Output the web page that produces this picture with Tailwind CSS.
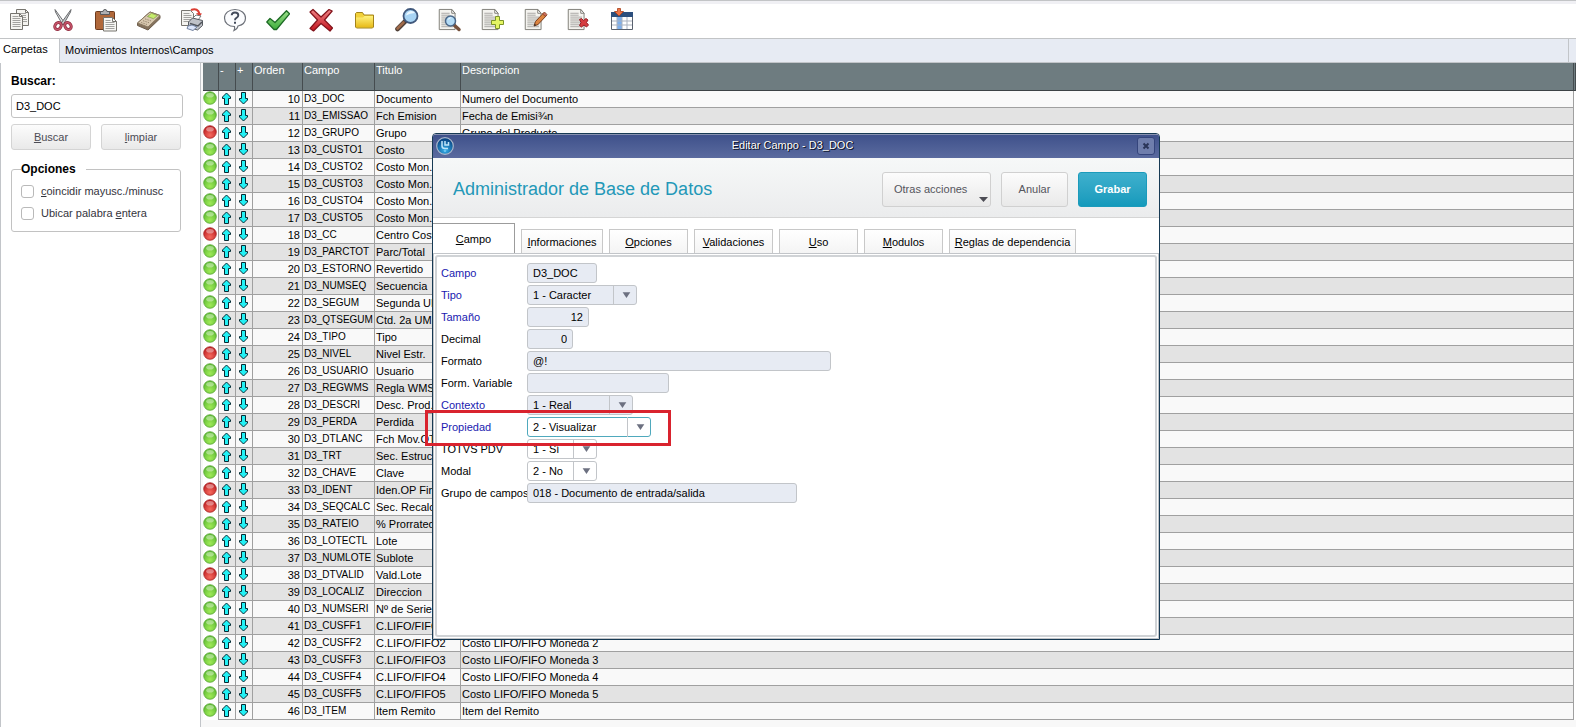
<!DOCTYPE html>
<html lang="es">
  <head>
    <meta charset="UTF-8" />
    <meta name="viewport" content="width=device-width, initial-scale=1.0" />
    <title>Editar Campo - D3_DOC</title>
    <script src="https://cdn.jsdelivr.net/npm/@tailwindcss/browser@4"></script>
  </head>
  <body class="relative h-screen overflow-hidden flex flex-col bg-white font-['Liberation_Sans',Arial,sans-serif] text-[11px] leading-4 text-black">
    <!-- Shared shapes -->
    <svg class="absolute size-0" aria-hidden="true">
      <defs>
        <radialGradient id="gGreen" cx="50%" cy="75%" r="70%">
          <stop offset="0" stop-color="#a0ea58" />
          <stop offset="1" stop-color="#5cba32" />
        </radialGradient>
        <radialGradient id="gRed" cx="50%" cy="75%" r="70%">
          <stop offset="0" stop-color="#f56a5e" />
          <stop offset="1" stop-color="#bd1c20" />
        </radialGradient>
        <radialGradient id="gBlue" cx="50%" cy="75%" r="70%">
          <stop offset="0" stop-color="#35b0ea" />
          <stop offset="1" stop-color="#06407f" />
        </radialGradient>
        <linearGradient id="gCheck" x1="0" y1="0" x2="0" y2="1">
          <stop offset="0" stop-color="#9be08a" />
          <stop offset="1" stop-color="#3fae3c" />
        </linearGradient>
        <linearGradient id="gFolder" x1="0" y1="0" x2="0" y2="1">
          <stop offset="0" stop-color="#fff27c" />
          <stop offset="1" stop-color="#e8bc1c" />
        </linearGradient>
        <linearGradient id="gCross" x1="0" y1="0" x2="0" y2="1">
          <stop offset="0" stop-color="#f08486" />
          <stop offset="1" stop-color="#c3121c" />
        </linearGradient>
        <symbol id="page" viewBox="0 0 24 24" preserveAspectRatio="none">
          <path d="M1.500 1.500h15l4 4v17h-19z" fill="#f4f3ef" stroke="#77756f" />
          <path d="M16.500 1.500v4h4z" fill="#fff" stroke="#77756f" />
          <path d="M4 5.500h10M4 7.500h10M4 9.500h14M4 11.500h14M4 13.500h14M4 15.500h14M4 17.500h14M4 19.500h14" stroke="#a3a29f" />
        </symbol>
        <symbol id="green" viewBox="0 0 14 14">
          <circle cx="7" cy="7" r="6.300" fill="url(#gGreen)" stroke="#5aa636" stroke-width=".8" />
          <ellipse cx="7" cy="4.200" rx="3.800" ry="2.300" fill="#fff" opacity=".4" />
        </symbol>
        <symbol id="red" viewBox="0 0 14 14">
          <circle cx="7" cy="7" r="6.300" fill="url(#gRed)" stroke="#a92a2a" stroke-width=".8" />
          <ellipse cx="7" cy="4.200" rx="3.800" ry="2.300" fill="#fff" opacity=".4" />
        </symbol>
        <symbol id="up" viewBox="0 0 11 13">
          <path d="M5.500 1 9.500 5v1.500h-2v6h-4v-6h-2V5z" fill="#22f0f4" stroke="#062a33" />
        </symbol>
        <symbol id="down" viewBox="0 0 11 13">
          <path d="M5.500 12 9.500 8V6.500h-2v-6h-4v6h-2V8z" fill="#22f0f4" stroke="#062a33" />
        </symbol>
      </defs>
    </svg>

    <!-- Toolbar -->
    <header class="h-[39px] shrink-0 border-t border-b border-[#c2c4c6] bg-white">
      <div class="h-full border-t-3 border-[#f0f0f4] flex items-center gap-[19px] pl-2 pb-0.5">
        <button type="button" aria-label="Copiar" class="size-6">
          <svg viewBox="0 0 24 24" fill="none">
            <path d="M8.500 1.500h9l3 3v13h-12z" fill="#f5f4f0" stroke="#77756f" />
            <path d="M17.500 1.500v3h3" stroke="#77756f" />
            <path d="M11 5.500h7M11 7.500h7M11 9.500h7M14 11.500h5M14 13.500h5" stroke="#a3a29f" />
            <path d="M2.500 5.500h9l3 3v13h-12z" fill="#f5f4f0" stroke="#77756f" />
            <path d="M11.500 5.500v3h3" stroke="#77756f" />
            <path d="M4.500 8.500h6M4.500 10.500h8M4.500 12.500h8M4.500 14.500h8M4.500 16.500h8M4.500 18.500h8" stroke="#a3a29f" />
          </svg>
        </button>
        <button type="button" aria-label="Cortar" class="size-6">
          <svg viewBox="0 0 24 24" fill="none">
            <path d="M4 1.500 14.500 16l-3 .5L4.500 4z" fill="#e4e5e6" stroke="#6b6d70" />
            <path d="M20 1.500 9.500 16l3 .5L19.500 4z" fill="#c6c8ca" stroke="#6b6d70" />
            <ellipse cx="7" cy="18" rx="3" ry="3.700" transform="rotate(35 7 18)" stroke="#8e2b3e" stroke-width="3" />
            <ellipse cx="17" cy="18" rx="3" ry="3.700" transform="rotate(-35 17 18)" stroke="#8e2b3e" stroke-width="3" />
            <ellipse cx="7" cy="18" rx="3" ry="3.700" transform="rotate(35 7 18)" stroke="#c8566c" stroke-width="1.500" />
            <ellipse cx="17" cy="18" rx="3" ry="3.700" transform="rotate(-35 17 18)" stroke="#c8566c" stroke-width="1.500" />
          </svg>
        </button>
        <button type="button" aria-label="Pegar" class="size-6">
          <svg viewBox="0 0 24 24" fill="none">
            <rect x="1.500" y="3.500" width="19" height="18" rx="1" fill="#b0683a" stroke="#6c3a1e" />
            <path d="M6.500 6.500V3.500H9q0-2 2-2t2 2h2.500v3z" fill="#aeb0b3" stroke="#595b5f" />
            <path d="M9.500 9.500h9l4 4v9.500h-13z" fill="#f7f7f4" stroke="#77756f" />
            <path d="M18.500 9.500v4h4" stroke="#77756f" />
            <path d="M11.500 12.500h5M11.500 14.500h9M11.500 16.500h9M11.500 18.500h9M11.500 20.500h9" stroke="#a3a29f" />
          </svg>
        </button>
        <button type="button" aria-label="Calculadora" class="size-6">
          <svg viewBox="0 0 24 24" fill="none">
            <path d="M.500 15 13 4l10 3.500v3L11 22 .500 17.500z" fill="#85725c" stroke="#6c5d4b" />
            <path d="M.500 15 13 4l10 3.500L11 19z" fill="#d8c8af" stroke="#8a7962" />
            <path d="m10.500 8.500 4-3.200 6 2.200-4 3.200z" fill="#c6ec6c" stroke="#7f9a45" stroke-width=".7" />
            <path d="m4 14.500 6 2M6 12.700l6 2M8 10.900l6 2" stroke="#9b8a72" stroke-dasharray="1.500 1" />
          </svg>
        </button>
        <button type="button" aria-label="Imprimir" class="size-6">
          <svg viewBox="0 0 24 24" fill="none">
            <path d="M1.500 2.500h9l3 3v12h-12z" fill="#f5f4f0" stroke="#77756f" />
            <path d="M3.500 5.500h6M3.500 7.500h8M3.500 9.500h8M3.500 11.500h8M3.500 13.500h6" stroke="#a3a29f" />
            <path d="M11 2q7-2.500 8.500 4" stroke="#db3d33" stroke-width="2" />
            <path d="m16 5 6 .5-2.500 3.500z" fill="#db3d33" />
            <path d="m12 11 4-4 5 1-3 4z" fill="#fff" stroke="#77797c" />
            <path d="m8.500 14 4-4 10 2.500v5l-5 4.500-9-3z" fill="#bfc2c8" stroke="#565a60" />
            <path d="m10 15.500 8 2.500 4-4" stroke="#50545b" stroke-width="1.500" />
            <path d="m8 18 4-1 5 2-4 3.500-6-2z" fill="#dce6fb" stroke="#72829f" />
          </svg>
        </button>
        <button type="button" aria-label="Ayuda" class="size-6">
          <svg viewBox="0 0 24 24" fill="none">
            <path d="M12 1.500c6 0 10.500 3.700 10.500 8.500 0 4-3 7-7.500 8q-.5 3-4 4.500 1-2 .5-4C5.500 18.500 1.500 15 1.500 10S6 1.500 12 1.500z" fill="#fbfcfe" stroke="#6c7078" stroke-width="1.200" />
            <path d="M8.700 7.300Q8.700 4.500 12 4.500t3.300 2.800Q15.300 9 13.500 9.800 12 10.500 12 12.200" stroke="#434b5b" stroke-width="1.900" />
            <path d="M11 13.700h2v2.100h-2z" fill="#434b5b" />
          </svg>
        </button>
        <button type="button" aria-label="Confirmar" class="size-6">
          <svg viewBox="0 0 24 24"><path d="M.800 14 4 10.500 9 14.500 20.500 2.800 23.500 5.800 10.500 21.500 8 21.500z" fill="url(#gCheck)" stroke="#1c6a24" stroke-width="1.300" stroke-linejoin="round" /></svg>
        </button>
        <button type="button" aria-label="Cancelar" class="size-6">
          <svg viewBox="0 0 24 24"><path d="M4 1.500 12 9 20 1.500l3.200 1.500-7.700 9L23.500 20 21 23l-9-7.500L4.500 23 1 20.500 8.500 12 1 4z" fill="url(#gCross)" stroke="#82131b" stroke-width="1.200" stroke-linejoin="round" /></svg>
        </button>
        <button type="button" aria-label="Carpeta" class="size-6">
          <svg viewBox="0 0 24 24"><path d="M3.500 19V5.500l1-1h6l1.500 2.500h9.500V19l-1 1h-16z" fill="#f2d13a" stroke="#a3831b" /><path d="M4 9.500h7l1.500-1.500H21V19H4z" fill="url(#gFolder)" /></svg>
        </button>
        <button type="button" aria-label="Buscar registro" class="size-6">
          <svg viewBox="0 0 24 24" fill="none">
            <path d="m2.500 21 8-8" stroke="#4f4038" stroke-width="4.600" stroke-linecap="round" />
            <path d="m2.500 20.500 6-6" stroke="#a06a4a" stroke-width="2.600" stroke-linecap="round" />
            <circle cx="15.500" cy="8" r="7" fill="#a8d4f4" stroke="#40587c" stroke-width="1.800" />
            <path d="M11 7.500q1-4.500 5.500-4.500 2 0 3.500 2-5 0-9 2.500z" fill="#eaf7ff" />
          </svg>
        </button>
        <button type="button" aria-label="Visualizar" class="size-6">
          <svg viewBox="0 0 24 24" fill="none">
            <use href="#page" width="20" height="23" />
            <path d="m16 17 5 4.500" stroke="#76513c" stroke-width="3.500" stroke-linecap="round" />
            <circle cx="12.500" cy="13" r="5" fill="#b4dcf6" stroke="#4a6788" stroke-width="1.500" />
            <path d="M9.500 12q1-3 4-2.500z" fill="#fff" />
          </svg>
        </button>
        <button type="button" aria-label="Incluir" class="size-6">
          <svg viewBox="0 0 24 24" fill="none">
            <use href="#page" width="20" height="23" />
            <path d="M14.500 8.500h4v4h4v4h-4v4h-4v-4h-4v-4h4z" fill="#e4f563" stroke="#7d9428" />
          </svg>
        </button>
        <button type="button" aria-label="Modificar" class="size-6">
          <svg viewBox="0 0 24 24" fill="none">
            <use href="#page" width="20" height="23" />
            <path d="m10 18 1.500-4.500 8-8.500 3 2.500-8.500 9z" fill="#dc8440" stroke="#7b3f1d" />
            <path d="m18.500 6 2-2 2.500 2.500-1.500 2z" fill="#c96a5b" stroke="#7b3f1d" stroke-width=".7" />
            <path d="m10 18 .7-2.200 1.500 1.300z" fill="#333" />
          </svg>
        </button>
        <button type="button" aria-label="Borrar" class="size-6">
          <svg viewBox="0 0 24 24" fill="none">
            <use href="#page" width="20" height="23" />
            <path d="m12.500 11.500 2-1 2 2 2.500-2 2 1.500-1.500 2.500 2 2.500-2 2-2.500-2-2.500 2-2-1.500 1.500-3z" fill="#d63d40" stroke="#981f25" />
          </svg>
        </button>
        <button type="button" aria-label="Columnas" class="size-6">
          <svg viewBox="0 0 24 24" fill="none">
            <path d="M1.500 4.500h21v17h-21z" fill="#fff" stroke="#59616e" />
            <path d="M1 4h22v5H1z" fill="#2c4f7d" />
            <path d="M7 9h5v12H7z" fill="#7db0ee" />
            <path d="M2 13h20M2 17h20M7 9v12M12 9v12M17 9v12" stroke="#a9b1bf" />
            <path d="M7.500 .500h3v3h3L9 8 4.500 3.500h3z" fill="#ef7443" stroke="#a73c1a" stroke-width=".8" />
          </svg>
        </button>
      </div>
    </header>

    <!-- Tab strip -->
    <nav class="h-6 shrink-0 flex bg-[#e7ebf3] border-b border-[#c2c5c9]">
      <a href="#" class="w-15 h-6 pl-[3px] pt-0.5 bg-white border-r border-[#c2c5c9]">Carpetas</a>
      <a href="#" class="pl-[5px] pt-[3px] flex-1">Movimientos Internos\Campos</a>
      <span class="w-2 border-l border-[#c2c5c9]"></span>
    </nav>

    <main class="flex flex-1 min-h-0">
      <aside class="w-[201px] shrink-0 border-r border-[#c2c5c9] border-l px-2.5 pt-2.5">
        <label for="buscar" class="block h-[21px] font-bold text-xs leading-4">Buscar:</label>
        <input id="buscar" value="D3_DOC" class="block w-[172px] h-6 border border-[#c2c2c2] rounded-[3px] px-1 outline-none" />
        <div class="flex gap-2.5 mt-1.5">
          <button type="button" class="w-20 h-[26px] rounded-[3px] border border-[#d4d4d4] bg-linear-to-b from-[#fcfcfc] to-[#e9e9e9] text-[#4c4c54]"><u>B</u>uscar</button>
          <button type="button" class="w-20 h-[26px] rounded-[3px] border border-[#d4d4d4] bg-linear-to-b from-[#fcfcfc] to-[#e9e9e9] text-[#4c4c54]"><u>l</u>impiar</button>
        </div>
        <fieldset class="mt-[11px] w-[170px] h-[71px] border border-[#c2c2c2] rounded-[3px] px-[9px]">
          <legend class="font-bold text-xs leading-4 pr-2.5">Opciones</legend>
          <div class="pt-[3px]">
            <label class="flex items-center gap-[7px] h-[22px] text-[#34343c] whitespace-nowrap"><input type="checkbox" class="appearance-none size-[13px] border border-[#b9b9b9] rounded-[3px]" /><span><u>c</u>oincidir mayusc./minusc</span></label>
            <label class="flex items-center gap-[7px] h-[22px] text-[#34343c]"><input type="checkbox" class="appearance-none size-[13px] border border-[#b9b9b9] rounded-[3px]" /><span>Ubicar palabra <u>e</u>ntera</span></label>
          </div>
        </fieldset>
      </aside>

      <div class="flex-1 min-w-0 pl-0.5 bg-[#f8f8f8]">
        <table class="w-full table-fixed border-separate border-spacing-0">
          <colgroup>
            <col class="w-4" />
            <col class="w-[17px]" />
            <col class="w-[17px]" />
            <col class="w-[50px]" />
            <col class="w-[72px]" />
            <col class="w-[86px]" />
            <col />
            <col class="w-0.5" />
          </colgroup>
          <thead>
            <tr class="h-7 bg-[#6e7c80] text-white text-left align-top *:font-normal *:leading-[14px] *:p-0 *:pl-px *:border-r *:border-b *:border-b-[#3c4245] *:border-r-[#454c4f]">
              <th></th>
              <th>-</th>
              <th>+</th>
              <th>Orden</th>
              <th>Campo</th>
              <th>Titulo</th>
              <th>Descripcion</th>
              <th></th>
            </tr>
          </thead>
          <tbody id="rows"></tbody>
        </table>
      </div>
    </main>

    <!-- Edit dialog -->
    <div role="dialog" aria-labelledby="dlgTitle" class="absolute left-[432px] top-[133px] w-[728px] h-[507px] flex flex-col bg-white border border-[#173a54] rounded-t-[4px] overflow-hidden">
      <div class="h-6 shrink-0 flex items-center bg-linear-to-b from-[#3f518b] to-[#5b6b9f] border-t border-[#8791b0] pl-[3px] pr-1 pb-px">
        <svg class="size-[18px]" viewBox="0 0 18 18" fill="none">
          <circle cx="9" cy="9" r="8.300" fill="url(#gBlue)" stroke="#a9b8cc" stroke-width="1.200" />
          <path d="M6 4v5q0 2.500 3 2.500h3M9 4v4h3.500V5" stroke="#bfe6fa" stroke-width="1.500" />
          <path d="m7.500 13.500 1.500 1.500 1.500-1.500z" fill="#9ee2ff" />
        </svg>
        <h2 id="dlgTitle" class="flex-1 text-center text-white pr-1.5 pb-0.5 [text-shadow:1px_1px_0_#101830,1px_0_0_#101830]">Editar Campo - D3_DOC</h2>
        <button type="button" aria-label="Cerrar" class="size-[18px] rounded-[3px] border border-[#35457c] bg-[#6f7eac] flex items-center justify-center">
          <svg class="size-2" viewBox="0 0 8 8"><path d="m1.500 1.500 5 5m0-5-5 5" stroke="#2a3558" stroke-width="2" /></svg>
        </button>
      </div>
      <div class="h-[60px] shrink-0 flex items-center bg-linear-to-b from-[#f6f8f8] to-[#ebeced] border-b border-[#d5d5d5] pl-5 pr-3 pt-[3px]">
        <h1 class="flex-1 text-lg text-[#2398b8]">Administrador de Base de Datos</h1>
        <div class="flex gap-2.5">
          <button type="button" class="relative w-[109px] h-[35px] rounded-[3px] border border-[#d0d0d0] bg-linear-to-b from-[#fcfcfc] to-[#e9e9e9] text-left pl-[11px] text-[#55555d]">
            Otras acciones
            <svg class="absolute right-[2px] bottom-1 w-[9px] h-[5px]" viewBox="0 0 9 5"><path d="M0 0h9L4.500 5z" fill="#4c4c54" /></svg>
          </button>
          <button type="button" class="w-[67px] h-[35px] rounded-[3px] border border-[#d0d0d0] bg-linear-to-b from-[#fcfcfc] to-[#e9e9e9] text-[#55555d]">Anular</button>
          <button type="button" class="w-[69px] h-[35px] rounded-[3px] border border-[#1b9bbb] bg-linear-to-b from-[#3eb0cd] to-[#139abc] text-white font-bold">Grabar</button>
        </div>
      </div>

      <div role="tablist" class="h-[35px] shrink-0 flex items-end gap-1.5 *:border *:border-b-0 *:border-[#c8c8c8] *:h-6 *:bg-linear-to-b *:from-white *:to-[#f4f4f4]">
        <button role="tab" aria-selected="true" type="button" class="w-[82px] h-[30px]! border-[#9c9c9c]! border-l-0! to-white!"><u>C</u>ampo</button>
        <button role="tab" type="button" class="w-[82px]"><u>I</u>nformaciones</button>
        <button role="tab" type="button" class="w-[79px]"><u>O</u>pciones</button>
        <button role="tab" type="button" class="w-[79px]"><u>V</u>alidaciones</button>
        <button role="tab" type="button" class="w-[79px]"><u>U</u>so</button>
        <button role="tab" type="button" class="w-[79px]"><u>M</u>odulos</button>
        <button role="tab" type="button" class="w-[127px] whitespace-nowrap"><u>R</u>eglas de dependencia</button>
      </div>

      <div class="flex-1 border border-[#c2c5c9] p-px">
        <form class="h-full border-2 border-[#d0d3d6] rounded-[3px] pl-1 pt-[5px] *:flex *:items-center *:h-[22px]">
          <div><label for="campo" class="w-[86px] text-[#1a1ab0]">Campo</label><input id="campo" value="D3_DOC" readonly class="w-[70px] h-5 px-[5px] rounded-[3px] border border-[#c2c5c9] bg-[#e7ebf3]" /></div>
          <div>
            <label for="tipo" class="w-[86px] text-[#1a1ab0]">Tipo</label>
            <span class="relative flex"><select id="tipo" class="appearance-none w-[110px] h-5 px-[5px] rounded-[3px] border border-[#c2c5c9] bg-[#e7ebf3]"><option>1 - Caracter</option></select>
            <svg class="absolute right-0 top-0 w-6 h-5 border-l border-[#c2c5c9] pointer-events-none" viewBox="0 0 24 20"><path d="M9 7h8l-4 6z" fill="#6c7080" /></svg></span>
          </div>
          <div><label for="tamano" class="w-[86px] text-[#1a1ab0]">Tamaño</label><input id="tamano" value="12" readonly class="w-[62px] h-5 px-[5px] text-right rounded-[3px] border border-[#c2c5c9] bg-[#e7ebf3]" /></div>
          <div><label for="decimal" class="w-[86px]">Decimal</label><input id="decimal" value="0" readonly class="w-[46px] h-5 px-[5px] text-right rounded-[3px] border border-[#c2c5c9] bg-[#e7ebf3]" /></div>
          <div><label for="formato" class="w-[86px]">Formato</label><input id="formato" value="@!" readonly class="w-[304px] h-5 px-[5px] rounded-[3px] border border-[#c2c5c9] bg-[#e7ebf3]" /></div>
          <div><label for="variable" class="w-[86px]">Form. Variable</label><input id="variable" readonly class="w-[142px] h-5 px-[5px] rounded-[3px] border border-[#c2c5c9] bg-[#e7ebf3]" /></div>
          <div>
            <label for="contexto" class="w-[86px] text-[#1a1ab0]">Contexto</label>
            <span class="relative flex"><select id="contexto" class="appearance-none w-[106px] h-5 px-[5px] rounded-[3px] border border-[#c2c5c9] bg-[#e7ebf3]"><option>1 - Real</option></select>
            <svg class="absolute right-0 top-0 w-6 h-5 border-l border-[#c2c5c9] pointer-events-none" viewBox="0 0 24 20"><path d="M9 7h8l-4 6z" fill="#6c7080" /></svg></span>
          </div>
          <div>
            <label for="propiedad" class="w-[86px] text-[#1a1ab0]">Propiedad</label>
            <span class="relative flex"><select id="propiedad" class="appearance-none w-[124px] h-5 px-[5px] rounded-[3px] border border-[#4fa9bd] bg-white"><option>2 - Visualizar</option></select>
            <svg class="absolute right-0 top-0 w-6 h-5 border-l border-[#c2c5c9] pointer-events-none" viewBox="0 0 24 20"><path d="M9 7h8l-4 6z" fill="#6c7080" /></svg></span>
          </div>
          <div>
            <label for="pdv" class="w-[86px]">TOTVS PDV</label>
            <span class="relative flex"><select id="pdv" class="appearance-none w-[70px] h-5 px-[5px] rounded-[3px] border border-[#c2c5c9] bg-white"><option>1 - Sí</option></select>
            <svg class="absolute right-0 top-0 w-6 h-5 border-l border-[#c2c5c9] pointer-events-none" viewBox="0 0 24 20"><path d="M9 7h8l-4 6z" fill="#6c7080" /></svg></span>
          </div>
          <div>
            <label for="modal" class="w-[86px]">Modal</label>
            <span class="relative flex"><select id="modal" class="appearance-none w-[70px] h-5 px-[5px] rounded-[3px] border border-[#c2c5c9] bg-white"><option>2 - No</option></select>
            <svg class="absolute right-0 top-0 w-6 h-5 border-l border-[#c2c5c9] pointer-events-none" viewBox="0 0 24 20"><path d="M9 7h8l-4 6z" fill="#6c7080" /></svg></span>
          </div>
          <div><label for="grupo" class="w-[86px] whitespace-nowrap">Grupo de campos</label><input id="grupo" value="018 - Documento de entrada/salida" readonly class="w-[270px] h-5 px-[5px] rounded-[3px] border border-[#c2c5c9] bg-[#e7ebf3]" /></div>
        </form>
      </div>
    </div>

    <!-- Highlight around Propiedad -->
    <div class="absolute left-[425px] top-[410px] w-[246px] h-9 border-3 border-[#d9232e] pointer-events-none"></div>

    <script>
      // [orden, campo, titulo, descripcion]
      const fields = [
        [10, 'D3_DOC', 'Documento', 'Numero del Documento'],
        [11, 'D3_EMISSAO', 'Fch Emision', 'Fecha de Emisi¾n'],
        [12, 'D3_GRUPO', 'Grupo', 'Grupo del Producto'],
        [13, 'D3_CUSTO1', 'Costo', ''],
        [14, 'D3_CUSTO2', 'Costo Mon. 2', ''],
        [15, 'D3_CUSTO3', 'Costo Mon. 3', ''],
        [16, 'D3_CUSTO4', 'Costo Mon. 4', ''],
        [17, 'D3_CUSTO5', 'Costo Mon. 5', ''],
        [18, 'D3_CC', 'Centro Costo', ''],
        [19, 'D3_PARCTOT', 'Parc/Total', ''],
        [20, 'D3_ESTORNO', 'Revertido', ''],
        [21, 'D3_NUMSEQ', 'Secuencia', ''],
        [22, 'D3_SEGUM', 'Segunda UM', ''],
        [23, 'D3_QTSEGUM', 'Ctd. 2a UM', ''],
        [24, 'D3_TIPO', 'Tipo', ''],
        [25, 'D3_NIVEL', 'Nivel Estr.', ''],
        [26, 'D3_USUARIO', 'Usuario', ''],
        [27, 'D3_REGWMS', 'Regla WMS', ''],
        [28, 'D3_DESCRI', 'Desc. Prod.', ''],
        [29, 'D3_PERDA', 'Perdida', ''],
        [30, 'D3_DTLANC', 'Fch Mov.OT', ''],
        [31, 'D3_TRT', 'Sec. Estruc.', ''],
        [32, 'D3_CHAVE', 'Clave', ''],
        [33, 'D3_IDENT', 'Iden.OP Fin.', ''],
        [34, 'D3_SEQCALC', 'Sec. Recalc.', ''],
        [35, 'D3_RATEIO', '% Prorrateo', ''],
        [36, 'D3_LOTECTL', 'Lote', ''],
        [37, 'D3_NUMLOTE', 'Sublote', ''],
        [38, 'D3_DTVALID', 'Vald.Lote', ''],
        [39, 'D3_LOCALIZ', 'Direccion', ''],
        [40, 'D3_NUMSERI', 'Nº de Serie', ''],
        [41, 'D3_CUSFF1', 'C.LIFO/FIFO1', ''],
        [42, 'D3_CUSFF2', 'C.LIFO/FIFO2', 'Costo LIFO/FIFO Moneda 2'],
        [43, 'D3_CUSFF3', 'C.LIFO/FIFO3', 'Costo LIFO/FIFO Moneda 3'],
        [44, 'D3_CUSFF4', 'C.LIFO/FIFO4', 'Costo LIFO/FIFO Moneda 4'],
        [45, 'D3_CUSFF5', 'C.LIFO/FIFO5', 'Costo LIFO/FIFO Moneda 5'],
        [46, 'D3_ITEM', 'Item Remito', 'Item del Remito'],
      ]
      const locked = [12, 18, 25, 33, 34, 38]

      document.getElementById('rows').innerHTML = fields
        .map(
          ([orden, campo, titulo, desc]) => `
          <tr class="h-[17px] bg-[#f9f9f9] even:bg-[#e3e3e3] *:p-0 *:h-[17px] *:border-r *:border-b *:border-[#a0a0a0] *:whitespace-nowrap">
            <td class="border-b-0! bg-white align-top"><svg class="size-3.5"><use href="#${locked.includes(orden) ? 'red' : 'green'}" /></svg></td>
            <td class="align-top"><svg class="w-[11px] h-[13px] ml-0.5 mt-px"><use href="#up" /></svg></td>
            <td class="align-top"><svg class="w-[11px] h-[13px] ml-0.5 mt-px"><use href="#down" /></svg></td>
            <td class="text-right pr-0.5!">${orden}</td>
            <td class="pl-px! text-[10px]">${campo}</td>
            <td class="pl-px!">${titulo}</td>
            <td class="pl-px!">${desc}</td>
            <td class="border-0! bg-white"></td>
          </tr>`
        )
        .join('')
    </script>
  </body>
</html>
